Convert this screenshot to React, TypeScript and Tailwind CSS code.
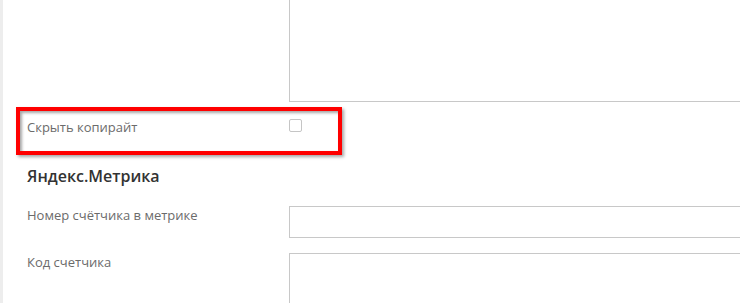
export default function App() {
  return (
    <div className="h-[303px] w-full overflow-hidden bg-white border-l-[3px] border-[#ededed] font-['Open_Sans',sans-serif]">
      <div className="flex flex-col pl-6">
        {/* textarea from previous field, cut at the top */}
        <div className="flex -mt-[8px]">
          <div className="w-[262px] shrink-0" />
          <textarea className="w-[520px] h-[110px] shrink-0 border border-[#c8c8c8] resize-none outline-none" />
        </div>

        {/* hide copyright */}
        <div className="relative flex mt-4">
          <label className="w-[262px] shrink-0 text-[13px] leading-[18px] text-[#6b6b6b]">
            Скрыть копирайт
          </label>
          <span className="mt-px w-[13px] h-[13px] rounded-[2px] border border-[#c5c5c5] bg-white" />
          <span className="absolute -left-[11px] -top-[11px] w-[326px] h-[48px] border-4 border-[#ff0000] shadow-[2px_2px_3px_rgba(0,0,0,0.35),inset_2px_2px_3px_rgba(0,0,0,0.35)] pointer-events-none" />
        </div>

        <h2 className="mt-[29px] text-[16px] leading-[22px] font-semibold text-[#333333]">
          Яндекс.Метрика
        </h2>

        <div className="flex mt-[19px]">
          <label className="w-[262px] shrink-0 text-[13px] leading-[18px] text-[#6b6b6b]">
            Номер счётчика в метрике
          </label>
          <input className="w-[520px] h-[32px] shrink-0 border border-[#c8c8c8] outline-none" />
        </div>

        <div className="flex mt-[15px]">
          <label className="w-[262px] shrink-0 text-[13px] leading-[18px] text-[#6b6b6b]">
            Код счетчика
          </label>
          <textarea className="w-[520px] h-[110px] shrink-0 border border-[#c8c8c8] resize-none outline-none" />
        </div>
      </div>
    </div>
  );
}
